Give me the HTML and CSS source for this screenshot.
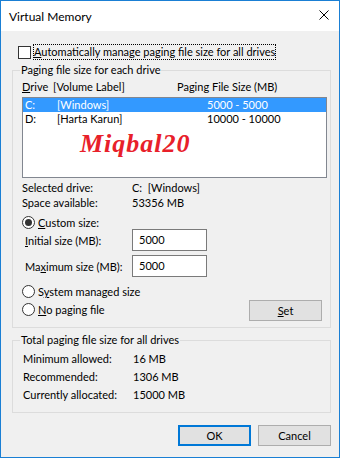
FILE: index.html
```html
<!DOCTYPE html>
<html lang="en">
<head>
  <meta charset="UTF-8">
  <meta name="viewport" content="width=device-width, initial-scale=1.0">
  <title>Virtual Memory</title>
  <link rel="stylesheet" href="styles.css">
</head>
<body>
  <div class="window">
    <div class="titlebar">
      <span class="title">Virtual Memory</span>
      <svg class="close" width="10" height="10" viewBox="0 0 10 10">
        <path d="M0.5 0.5 L9.5 9.5 M9.5 0.5 L0.5 9.5" stroke="#000" stroke-width="1" fill="none"/>
      </svg>
    </div>

    <div class="content">
      <div class="auto-row">
        <span class="checkbox"></span>
        <span class="focus"><u>A</u>utomatically manage paging file size for all drives</span>
      </div>

      <!-- Per drive settings -->
      <fieldset class="group">
        <legend>Paging file size for each drive</legend>
        <div class="group-body drives">
          <div class="list-head">
            <span><u>D</u>rive</span>
            <span>[Volume Label]</span>
            <span>Paging File Size (MB)</span>
          </div>
          <div class="listbox">
            <div class="row selected"><span>C:</span><span>[Windows]</span><span>5000 - 5000</span></div>
            <div class="row"><span>D:</span><span>[Harta Karun]</span><span>10000 - 10000</span></div>
            <div class="watermark">Miqbal20</div>
          </div>

          <div class="info">
            <span>Selected drive:</span><span>C:&nbsp; [Windows]</span>
            <span>Space available:</span><span>53356 MB</span>
          </div>

          <div class="radio-row custom">
            <span class="radio checked"></span>
            <span><u>C</u>ustom size:</span>
          </div>
          <div class="sizes">
            <span><u>I</u>nitial size (MB):</span>
            <span class="textbox">5000</span>
            <span>Ma<u>x</u>imum size (MB):</span>
            <span class="textbox">5000</span>
          </div>

          <div class="bottom">
            <div class="radios">
              <div class="radio-row">
                <span class="radio"></span>
                <span>S<u>y</u>stem managed size</span>
              </div>
              <div class="radio-row">
                <span class="radio"></span>
                <span><u>N</u>o paging file</span>
              </div>
            </div>
            <button class="btn set-btn"><u>S</u>et</button>
          </div>
        </div>
      </fieldset>

      <!-- Totals -->
      <fieldset class="group total">
        <legend>Total paging file size for all drives</legend>
        <div class="group-body totals">
          <span>Minimum allowed:</span><span>16 MB</span>
          <span>Recommended:</span><span>1306 MB</span>
          <span>Currently allocated:</span><span>15000 MB</span>
        </div>
      </fieldset>

      <div class="footer">
        <button class="btn default">OK</button>
        <button class="btn">Cancel</button>
      </div>
    </div>
  </div>
</body>
</html>
```

FILE: styles.css
```css
/* Dialog frame */
body {
  margin: 0;
  font-family: Lato, "Liberation Sans", sans-serif;
  font-size: 11px;
  color: #000;
}

.window {
  width: 340px;
  height: 458px;
  box-sizing: border-box;
  border: 1px solid #1a7fd4;
  background: #f0f0f0;
}

.titlebar {
  height: 30px;
  background: #fff;
  display: flex;
  align-items: center;
  justify-content: space-between;
  padding: 0 10px 0 8px;
}

.title {
  font-size: 12px;
}

.close {
  margin-top: -2px;
}

.content {
  padding: 0 8px 0 11px;
}

/* Checkbox row */
.auto-row {
  display: flex;
  margin: 13px 0 0 6px;
}

.checkbox {
  width: 13px;
  height: 13px;
  box-sizing: border-box;
  border: 1px solid #333;
  background: #fff;
  margin-top: 2px;
}

.focus {
  margin-left: 2px;
  border: 1px dotted #000;
  line-height: 14px;
}

/* Group boxes */
.group {
  margin: 4px 0 0;
  padding: 0;
  border: 1px solid #dcdcdc;
  min-width: 0;
}

.group legend {
  margin-left: 7px;
  padding: 0 1px;
  line-height: 12px;
}

.drives {
  padding: 4px 3px 6px 9px;
}

.list-head {
  display: grid;
  grid-template-columns: 31px 124px auto;
  line-height: 14px;
}

.listbox {
  position: relative;
  margin-top: 3px;
  height: 81px;
  box-sizing: border-box;
  border: 1px solid #828790;
  background: #fff;
}

.row {
  display: grid;
  grid-template-columns: 32px 150px auto;
  height: 14px;
  line-height: 14px;
  padding-left: 2px;
}

.row.selected {
  background: #3399ff;
  color: #fff;
}

.watermark {
  position: absolute;
  left: 57px;
  top: 34px;
  font: italic bold 26px "Liberation Serif", serif;
  line-height: 24px;
  letter-spacing: 1px;
  color: #e8202a;
}

.info {
  display: grid;
  grid-template-columns: 110px auto;
  line-height: 15px;
  margin-top: 2px;
}

/* Radio buttons */
.radio-row {
  display: flex;
  align-items: center;
  height: 13px;
  line-height: 13px;
}

.radio-row.custom {
  margin-top: 6px;
}

.radio {
  width: 13px;
  height: 13px;
  box-sizing: border-box;
  border: 1px solid #333;
  border-radius: 50%;
  background: #fff;
  margin-right: 3px;
  display: flex;
  align-items: center;
  justify-content: center;
}

.radio.checked::after {
  content: "";
  width: 7px;
  height: 7px;
  border-radius: 50%;
  background: #333;
}

.sizes {
  display: grid;
  grid-template-columns: 107px 75px;
  row-gap: 4px;
  align-items: center;
  padding-left: 3px;
}

.textbox {
  height: 22px;
  box-sizing: border-box;
  border: 1px solid #7a7a7a;
  background: #fff;
  padding-left: 6px;
  line-height: 20px;
}

.bottom {
  display: flex;
  justify-content: space-between;
  align-items: flex-start;
  margin-top: 8px;
}

.radios {
  display: flex;
  flex-direction: column;
  gap: 5px;
}

/* Buttons */
.btn {
  width: 73px;
  height: 21px;
  box-sizing: border-box;
  border: 1px solid #adadad;
  background: #e1e1e1;
  font: inherit;
  color: #000;
  padding: 0;
}

.btn.default {
  border: 2px solid #0078d7;
}

.set-btn {
  margin: 15px 5px 0 0;
}

.total {
  margin-top: 6px;
}

.totals {
  display: grid;
  grid-template-columns: 110px auto;
  line-height: 15px;
  row-gap: 3px;
  padding: 5px 0 10px 10px;
}

.footer {
  display: flex;
  justify-content: flex-end;
  gap: 7px;
  margin-top: 12px;
}
```
